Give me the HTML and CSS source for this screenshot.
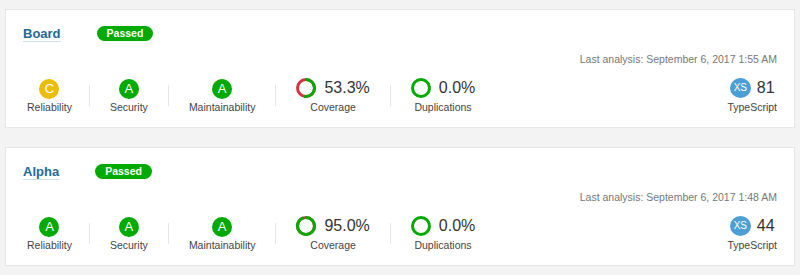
FILE: index.html
```html
<!DOCTYPE html>
<html lang="en">
<head>
  <meta charset="UTF-8" />
  <title>Projects</title>
  <link rel="stylesheet" href="styles.css">
</head>
<body>
  <div class="projects">

    <div class="card">
      <div class="card-header">
        <a class="card-title" href="#">Board</a>
        <span class="gate">Passed</span>
      </div>
      <div class="analysis">Last analysis: September 6, 2017 1:55 AM</div>
      <div class="measures">
        <div class="measure">
          <div class="measure-top"><span class="rating rating-c">C</span></div>
          <div class="measure-label">Reliability</div>
        </div>
        <span class="divider"></span>
        <div class="measure">
          <div class="measure-top"><span class="rating rating-a">A</span></div>
          <div class="measure-label">Security</div>
        </div>
        <span class="divider"></span>
        <div class="measure">
          <div class="measure-top"><span class="rating rating-a">A</span></div>
          <div class="measure-label">Maintainability</div>
        </div>
        <span class="divider"></span>
        <div class="measure">
          <div class="measure-top">
            <svg class="donut" width="20" height="20" viewBox="0 0 20 20">
              <circle cx="10" cy="10" r="8.5" class="donut-bad" />
              <circle cx="10" cy="10" r="8.5" class="donut-good" pathLength="100" stroke-dasharray="53.3 100" />
            </svg>
            <span class="value">53.3%</span>
          </div>
          <div class="measure-label">Coverage</div>
        </div>
        <span class="divider"></span>
        <div class="measure">
          <div class="measure-top">
            <svg class="donut" width="20" height="20" viewBox="0 0 20 20">
              <circle cx="10" cy="10" r="8.5" class="donut-good" />
            </svg>
            <span class="value">0.0%</span>
          </div>
          <div class="measure-label">Duplications</div>
        </div>
        <div class="measure measure-size">
          <div class="measure-top"><span class="size">XS</span><span class="value">81</span></div>
          <div class="measure-label">TypeScript</div>
        </div>
      </div>
    </div>

    <div class="card">
      <div class="card-header">
        <a class="card-title" href="#">Alpha</a>
        <span class="gate">Passed</span>
      </div>
      <div class="analysis">Last analysis: September 6, 2017 1:48 AM</div>
      <div class="measures">
        <div class="measure">
          <div class="measure-top"><span class="rating rating-a">A</span></div>
          <div class="measure-label">Reliability</div>
        </div>
        <span class="divider"></span>
        <div class="measure">
          <div class="measure-top"><span class="rating rating-a">A</span></div>
          <div class="measure-label">Security</div>
        </div>
        <span class="divider"></span>
        <div class="measure">
          <div class="measure-top"><span class="rating rating-a">A</span></div>
          <div class="measure-label">Maintainability</div>
        </div>
        <span class="divider"></span>
        <div class="measure">
          <div class="measure-top">
            <svg class="donut" width="20" height="20" viewBox="0 0 20 20">
              <circle cx="10" cy="10" r="8.5" class="donut-bad" />
              <circle cx="10" cy="10" r="8.5" class="donut-good" pathLength="100" stroke-dasharray="95 100" />
            </svg>
            <span class="value">95.0%</span>
          </div>
          <div class="measure-label">Coverage</div>
        </div>
        <span class="divider"></span>
        <div class="measure">
          <div class="measure-top">
            <svg class="donut" width="20" height="20" viewBox="0 0 20 20">
              <circle cx="10" cy="10" r="8.5" class="donut-good" />
            </svg>
            <span class="value">0.0%</span>
          </div>
          <div class="measure-label">Duplications</div>
        </div>
        <div class="measure measure-size">
          <div class="measure-top"><span class="size">XS</span><span class="value">44</span></div>
          <div class="measure-label">TypeScript</div>
        </div>
      </div>
    </div>

  </div>
</body>
</html>
```

FILE: styles.css
```css
* { box-sizing: border-box; }

body {
  margin: 0;
  background: #f3f3f3;
  font-family: 'Liberation Sans', Arial, sans-serif;
  color: #444;
}

.projects {
  padding: 9px 5px 0;
  display: flex;
  flex-direction: column;
  gap: 19px;
}

.card {
  background: #fff;
  border: 1px solid #e6e6e6;
  padding: 15px 17px 13px;
}

.card-header {
  display: flex;
  align-items: center;
  height: 17px;
}

.card-title {
  font-size: 13px;
  font-weight: bold;
  color: #236a97;
  text-decoration: none;
  border-bottom: 1px solid #cae3f2;
  line-height: 15px;
}

.gate {
  margin-left: 36px;
  background: #00aa00;
  color: #fff;
  font-size: 10.5px;
  font-weight: bold;
  line-height: 15px;
  height: 15px;
  padding: 0 10px;
  border-radius: 8px;
}

.analysis {
  margin-top: 11px;
  text-align: right;
  font-size: 10.5px;
  line-height: 13px;
  color: #777;
}

.measures {
  margin-top: 11px;
  display: flex;
  align-items: center;
}

.measure {
  display: flex;
  flex-direction: column;
  align-items: center;
  padding: 0 20px;
}

.measure:first-child {
  padding-left: 4px;
  padding-right: 17px;
}

.measure-top {
  height: 22px;
  display: flex;
  align-items: center;
  gap: 8px;
}

.measure-label {
  margin-top: 2px;
  font-size: 10.5px;
  line-height: 13px;
  color: #444;
}

.divider {
  width: 1px;
  height: 21px;
  background: #e6e6e6;
}

.rating {
  width: 20px;
  height: 20px;
  margin-top: 2px;
  border-radius: 50%;
  color: #fff;
  font-size: 13px;
  line-height: 20px;
  text-align: center;
}
.rating-a { background: #00aa00; }
.rating-c { background: #eabe06; }

.donut circle {
  fill: none;
  stroke-width: 3;
}
.donut-bad { stroke: #d4333f; }
.donut-good {
  stroke: #00aa00;
  transform: rotate(-90deg);
  transform-origin: 10px 10px;
}

.value {
  font-size: 16px;
  color: #333;
}

.measure-size {
  margin-left: auto;
  padding: 0;
}
.measure-size .measure-top { gap: 6px; }

.size {
  width: 21px;
  height: 20px;
  border-radius: 50%;
  background: #4b9fd5;
  color: #fff;
  font-size: 10px;
  line-height: 20px;
  text-align: center;
}
```
